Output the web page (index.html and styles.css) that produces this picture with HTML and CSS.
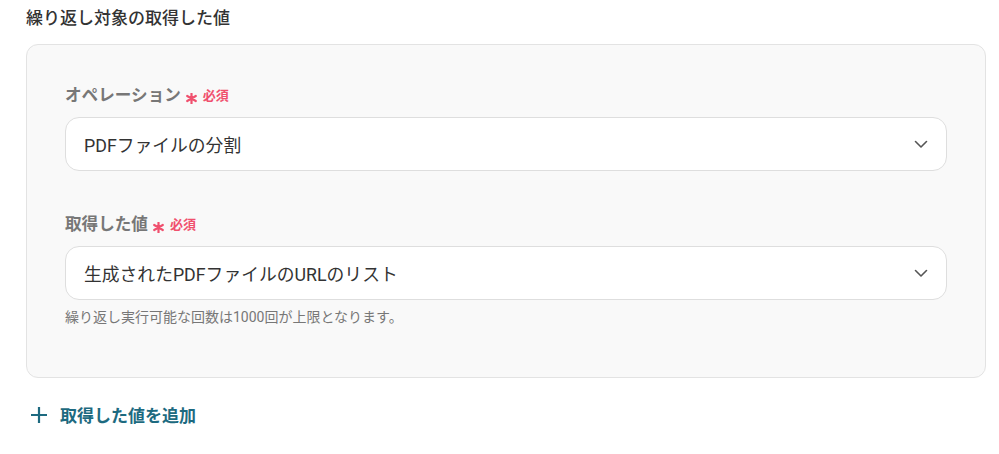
FILE: index.html
```html
<!DOCTYPE html>
<html lang="ja">
<head>
<meta charset="utf-8">
<link rel="stylesheet" href="styles.css">
</head>
<body>
<div class="page">
  <h2 class="title">繰り返し対象の取得した値</h2>
  <div class="card">
    <div class="field">
      <div class="label">オペレーション<svg class="ast" width="11" height="11" viewBox="0 0 10 10"><path d="M5 0.5 V9.5 M1.1 2.75 L8.9 7.25 M1.1 7.25 L8.9 2.75" stroke="#f0506e" stroke-width="2" stroke-linecap="round"/></svg><span class="req">必須</span></div>
      <div class="select">
        <span>PDFファイルの分割</span>
        <svg class="chev" width="16" height="16" viewBox="0 0 16 16"><path d="M2.5 5.5 L8 11 L13.5 5.5" fill="none" stroke="#555" stroke-width="1.6" stroke-linecap="round" stroke-linejoin="round"/></svg>
      </div>
    </div>
    <div class="field">
      <div class="label">取得した値<svg class="ast" width="11" height="11" viewBox="0 0 10 10"><path d="M5 0.5 V9.5 M1.1 2.75 L8.9 7.25 M1.1 7.25 L8.9 2.75" stroke="#f0506e" stroke-width="2" stroke-linecap="round"/></svg><span class="req">必須</span></div>
      <div class="select">
        <span>生成されたPDFファイルのURLのリスト</span>
        <svg class="chev" width="16" height="16" viewBox="0 0 16 16"><path d="M2.5 5.5 L8 11 L13.5 5.5" fill="none" stroke="#555" stroke-width="1.6" stroke-linecap="round" stroke-linejoin="round"/></svg>
      </div>
      <p class="help">繰り返し実行可能な回数は1000回が上限となります。</p>
    </div>
  </div>
  <div class="add">
    <svg width="16" height="16" viewBox="0 0 16 16"><path d="M8 1 V15 M1 8 H15" stroke="#1d6a80" stroke-width="2.2" stroke-linecap="square"/></svg>
    <span>取得した値を追加</span>
  </div>
</div>
</body>
</html>
```
FILE: styles.css
```css
* { box-sizing: border-box; }
body {
  margin: 0;
  background: #fff;
  font-family: Roboto, "Noto Sans CJK JP", sans-serif;
  color: #333;
}
.page {
  width: 960px;
  margin-left: 26px;
  padding-top: 6px;
}
.title {
  margin: 0;
  font-size: 17px;
  font-weight: 500;
  line-height: 24px;
  color: #333;
}
.card {
  margin-top: 14px;
  border: 1px solid #e3e3e3;
  border-radius: 12px;
  background: #f9f9f9;
  padding: 39px 38px 50px;
}
.field + .field { margin-top: 42px; }
.label {
  display: flex;
  align-items: center;
  font-size: 16.6px;
  font-weight: 700;
  color: #777;
  line-height: 24px;
}
.ast {
  margin-left: 5px;
  position: relative;
  top: 2px;
}
.req {
  color: #f0506e;
  font-size: 13px;
  font-weight: 700;
  margin-left: 6px;
}
.select {
  margin-top: 9px;
  height: 54px;
  background: #fff;
  border: 1px solid #dedede;
  border-radius: 14px;
  display: flex;
  align-items: center;
  justify-content: space-between;
  padding: 0 17px 0 18px;
  font-size: 17.8px;
  color: #333;
}
.help {
  margin: 7px 0 0;
  font-size: 14px;
  color: #777;
  line-height: 20px;
}
.add {
  margin-top: 24px;
  margin-left: 5px;
  display: flex;
  align-items: center;
  gap: 13px;
  color: #1d6a80;
  font-size: 17px;
  font-weight: 700;
}
```
